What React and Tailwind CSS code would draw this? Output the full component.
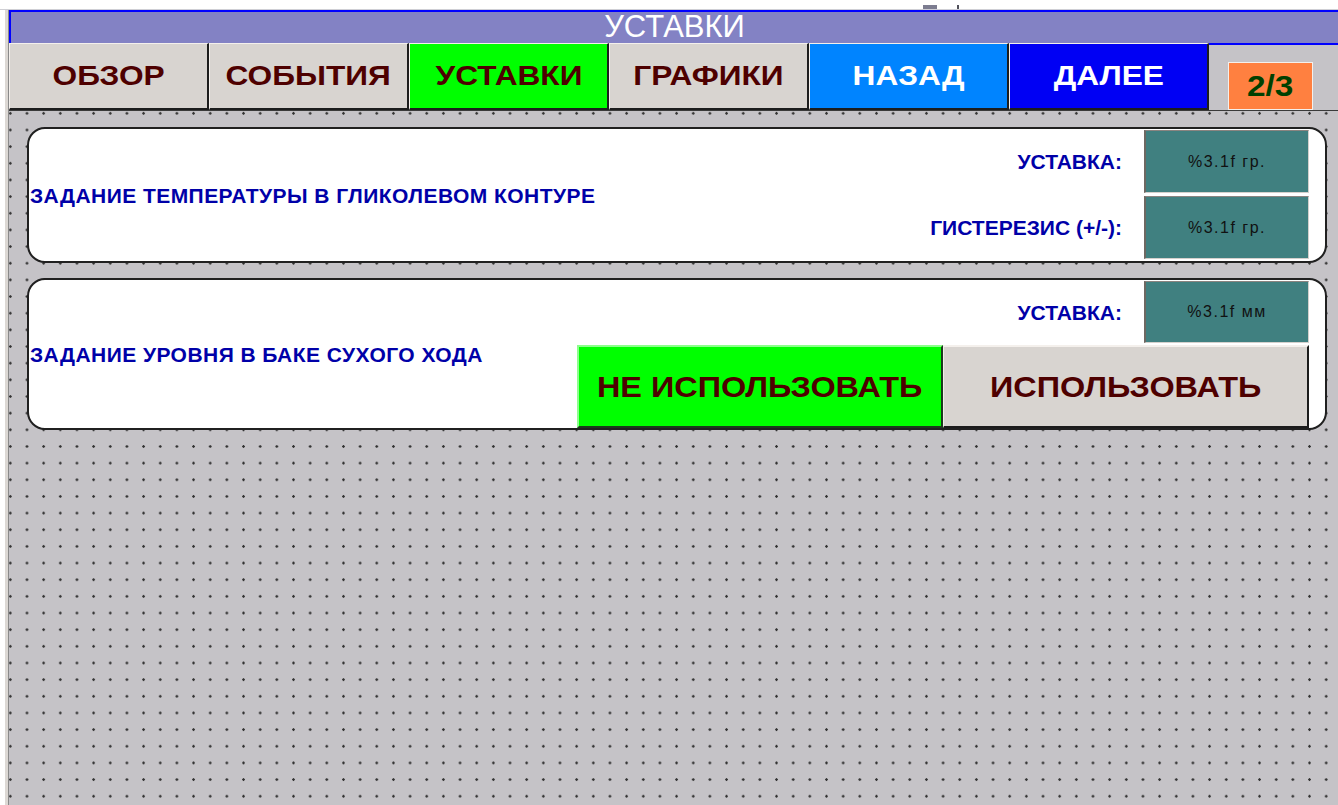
import React from "react";

const FONT = { fontFamily: '"Liberation Sans", Arial, sans-serif' };

function NavButton({ label, bg, color }) {
  return (
    <div
      className={`w-[200px] h-full flex items-center justify-center border-t border-l border-b-2 border-r-2 border-t-[#f4f0ec] border-l-[#f4f0ec] border-b-[#1c1c1c] border-r-[#1c1c1c] ${bg}`}
    >
      <span className={`inline-block scale-x-[1.13] text-[28px] font-bold leading-none ${color}`}>{label}</span>
    </div>
  );
}

function ValueBox({ text, h }) {
  return (
    <div
      className={`w-[165px] ${h} flex items-center justify-center bg-[#408080] border-l-2 border-t border-r border-b border-l-[#6e6862] border-t-[#8a8480] border-r-[#d4d0cc] border-b-[#d4d0cc]`}
    >
      <span className="text-[16px] tracking-[1.5px] text-[#111]">{text}</span>
    </div>
  );
}

function Label({ children }) {
  return <span className="text-[21px] font-bold text-[#0000a8] leading-none">{children}</span>;
}

function Caption({ children }) {
  return <span className="text-[21px] tracking-[0.45px] font-bold text-[#0000a8] leading-none">{children}</span>;
}

export default function App() {
  return (
    <div className="w-[1338px] h-[805px] bg-white flex flex-col overflow-hidden" style={FONT}>
      {/* top white strip with small marks */}
      <div className="h-[10px] flex items-end pl-[923px] border-b border-[#cfcfd4]">
        <div className="w-[14px] h-[4px] bg-[#7c7c90]" />
        <div className="w-[2px] h-[4px] bg-[#50505a] ml-[20px]" />
      </div>

      <div className="flex-1 flex">
        {/* left frame strip */}
        <div className="w-[9px] flex">
          <div className="w-[5px] bg-white" />
          <div className="w-[3px] bg-[#dcd8d4]" />
          <div className="w-[1px] bg-[#8a8a8a]" />
        </div>

        <div className="flex-1 flex flex-col">
          {/* title bar */}
          <div className="h-[33px] bg-[#8382c4] border-t-2 border-l-2 border-[#0000ff] flex justify-center">
            <span className="text-[31px] leading-[29px] text-white">УСТАВКИ</span>
          </div>

          {/* navigation row */}
          <div className="h-[68px] flex bg-[#c5c3c7] border-b border-[#3a3a3a]">
            <div className="flex h-full">
              <NavButton label="ОБЗОР" bg="bg-[#d8d4d0]" color="text-[#4e0000]" />
              <NavButton label="СОБЫТИЯ" bg="bg-[#d8d4d0]" color="text-[#4e0000]" />
              <NavButton label="УСТАВКИ" bg="bg-[#00ff00]" color="text-[#4e0000]" />
              <NavButton label="ГРАФИКИ" bg="bg-[#d8d4d0]" color="text-[#4e0000]" />
              <NavButton label="НАЗАД" bg="bg-[#0084ff]" color="text-white" />
              <NavButton label="ДАЛЕЕ" bg="bg-[#0000f4]" color="text-white" />
            </div>
            <div className="flex-1 border-t-2 border-[#0000ff] pl-[19px] pt-[17px]">
              <div className="w-[85px] h-[48px] bg-[#ff8040] border border-[#f4f0ec] flex items-center justify-center">
                <span className="inline-block scale-x-[1.15] text-[29px] font-bold text-[#004000] leading-none">2/3</span>
              </div>
            </div>
          </div>

          {/* dotted workspace */}
          <div className="flex-1 flex flex-col gap-[15px] pt-[16px] pl-[18px] pr-[11px] bg-[#c5c3c7] bg-[radial-gradient(circle,#333_1px,transparent_1.5px)] bg-[length:16.67px_16.67px] bg-[position:-7px_-6px]">
            {/* glycol temperature panel */}
            <div className="h-[136px] rounded-[18px] border-2 border-[#202020] bg-white flex">
              <div className="flex-1 flex items-center pl-[1px]">
                <Caption>ЗАДАНИЕ ТЕМПЕРАТУРЫ В ГЛИКОЛЕВОМ КОНТУРЕ</Caption>
              </div>
              <div className="flex flex-col gap-[3px] pt-[1px] pr-[16px]">
                <div className="flex items-center justify-end gap-[22px]">
                  <Label>УСТАВКА:</Label>
                  <ValueBox text="%3.1f гр." h="h-[63px]" />
                </div>
                <div className="flex items-center justify-end gap-[22px]">
                  <Label>ГИСТЕРЕЗИС (+/-):</Label>
                  <ValueBox text="%3.1f гр." h="h-[63px]" />
                </div>
              </div>
            </div>

            {/* dry-run tank level panel */}
            <div className="h-[152px] rounded-[18px] border-2 border-[#202020] bg-white flex">
              <div className="flex-1 flex items-center pl-[1px]">
                <Caption>ЗАДАНИЕ УРОВНЯ В БАКЕ СУХОГО ХОДА</Caption>
              </div>
              <div className="w-[748px] flex flex-col gap-[2px] pt-[1px] pr-[16px]">
                <div className="flex items-center justify-end gap-[22px]">
                  <Label>УСТАВКА:</Label>
                  <ValueBox text="%3.1f мм" h="h-[62px]" />
                </div>
                <div className="flex-1 flex">
                  <div className="w-[366px] flex items-center justify-center bg-[#00ff00] border-2 border-t-[#8cff8c] border-l-[#8cff8c] border-b-[#1c3a1c] border-r-[#1c3a1c]">
                    <span className="inline-block scale-x-[1.08] text-[30px] font-bold leading-none text-[#4e0000]">НЕ ИСПОЛЬЗОВАТЬ</span>
                  </div>
                  <div className="flex-1 flex items-center justify-center bg-[#d8d4d0] border-t-2 border-l border-b-2 border-r-2 border-t-[#f4f0ec] border-l-[#f4f0ec] border-b-[#1c1c1c] border-r-[#1c1c1c]">
                    <span className="inline-block scale-x-[1.08] text-[30px] font-bold leading-none text-[#4e0000]">ИСПОЛЬЗОВАТЬ</span>
                  </div>
                </div>
              </div>
            </div>
          </div>
        </div>
      </div>
    </div>
  );
}
